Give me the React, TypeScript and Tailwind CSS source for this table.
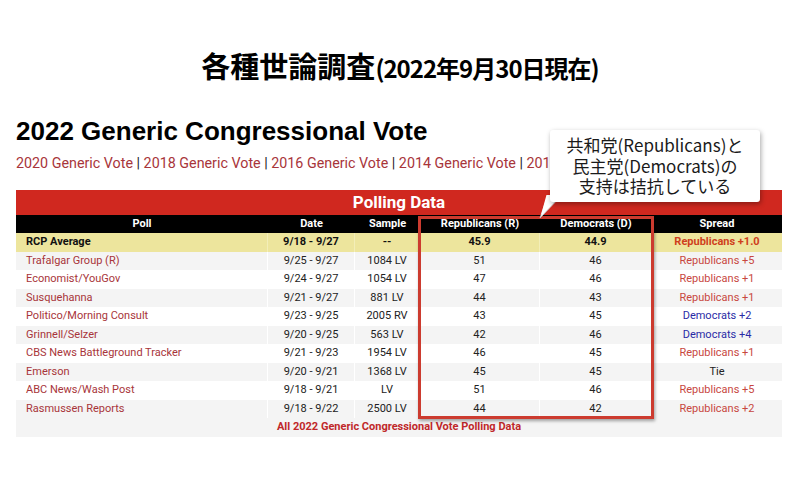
import React from "react";

type Row = {
  poll: string;
  date: string;
  sample: string;
  r: string;
  d: string;
  spread: string;
  party: "R" | "D" | "T";
};

const rows: Row[] = [
  { poll: "Trafalgar Group (R)", date: "9/25 - 9/27", sample: "1084 LV", r: "51", d: "46", spread: "Republicans +5", party: "R" },
  { poll: "Economist/YouGov", date: "9/24 - 9/27", sample: "1054 LV", r: "47", d: "46", spread: "Republicans +1", party: "R" },
  { poll: "Susquehanna", date: "9/21 - 9/27", sample: "881 LV", r: "44", d: "43", spread: "Republicans +1", party: "R" },
  { poll: "Politico/Morning Consult", date: "9/23 - 9/25", sample: "2005 RV", r: "43", d: "45", spread: "Democrats +2", party: "D" },
  { poll: "Grinnell/Selzer", date: "9/20 - 9/25", sample: "563 LV", r: "42", d: "46", spread: "Democrats +4", party: "D" },
  { poll: "CBS News Battleground Tracker", date: "9/21 - 9/23", sample: "1954 LV", r: "46", d: "45", spread: "Republicans +1", party: "R" },
  { poll: "Emerson", date: "9/20 - 9/21", sample: "1368 LV", r: "45", d: "45", spread: "Tie", party: "T" },
  { poll: "ABC News/Wash Post", date: "9/18 - 9/21", sample: "LV", r: "51", d: "46", spread: "Republicans +5", party: "R" },
  { poll: "Rasmussen Reports", date: "9/18 - 9/22", sample: "2500 LV", r: "44", d: "42", spread: "Republicans +2", party: "R" },
];

const cols = "grid grid-cols-[252px_87px_65px_120px_112px_130px]";

export default function App() {
  return (
    <div
      className="relative w-[800px] h-[494px] overflow-hidden bg-white"
      style={{ fontFamily: "Roboto, 'Noto Sans CJK JP', sans-serif" }}
    >
      <div className="h-[84px] pt-[48px]">
        <h1
          className="h-[34px] text-center leading-[34px] font-bold text-black whitespace-nowrap"
          style={{ fontFamily: "'Noto Sans CJK JP', sans-serif" }}
        >
          <span className="text-[29px]">各種世論調査</span>
          <span className="text-[24px] tracking-[-1px]">(2022年9月30日現在)</span>
        </h1>
      </div>

      <div className="px-4">
        <div
          className="mt-[32px] h-[30px] text-[26px] leading-[30px] font-bold text-black whitespace-nowrap"
          style={{ fontFamily: "'Liberation Sans', Arial, sans-serif" }}
        >
          2022 Generic Congressional Vote
        </div>
        <div className="mt-[7px] h-[20px] text-[14.3px] leading-[20px] text-[#a8353a] whitespace-nowrap">
          2020 Generic Vote <span className="text-[#222]">|</span> 2018 Generic Vote{" "}
          <span className="text-[#222]">|</span> 2016 Generic Vote <span className="text-[#222]">|</span> 2014
          Generic Vote <span className="text-[#222]">|</span> 201
        </div>

        <div className="relative mt-[17px] w-[766px] text-[11px]">
          <div className="h-[25px] bg-[#d0281f] text-white font-bold text-[17px] leading-[25px] text-center">
            Polling Data
          </div>
          <div className={`${cols} h-[18px] bg-black text-white font-bold leading-[18px] text-center`}>
            <div>Poll</div>
            <div>Date</div>
            <div>Sample</div>
            <div>Republicans (R)</div>
            <div>Democrats (D)</div>
            <div>Spread</div>
          </div>
          <div className={`${cols} h-[18.5px] bg-[#ede59d] font-bold leading-[18.5px] text-center text-[#111]`}>
            <div className="text-left pl-[10px] border-r border-[#f3eeb8]">RCP Average</div>
            <div className="border-r border-[#f3eeb8]">9/18 - 9/27</div>
            <div className="border-r border-[#f3eeb8]">--</div>
            <div className="border-r border-[#f3eeb8]">45.9</div>
            <div className="border-r border-[#f3eeb8]">44.9</div>
            <div className="text-[#cf3f1c]">Republicans +1.0</div>
          </div>
          {rows.map((r, i) => (
            <div
              key={r.poll}
              className={`${cols} h-[18.5px] leading-[18.5px] text-center text-[#222] ${
                i % 2 === 0 ? "bg-[#f4f4f4]" : "bg-white"
              }`}
            >
              <div className="text-left pl-[10px] text-[#a8353a] border-r border-white">{r.poll}</div>
              <div className="border-r border-white">{r.date}</div>
              <div className="border-r border-white">{r.sample}</div>
              <div className="border-r border-white">{r.r}</div>
              <div className="border-r border-white">{r.d}</div>
              <div
                className={
                  r.party === "R" ? "text-[#c8473f]" : r.party === "D" ? "text-[#2a2aa6]" : "text-[#222]"
                }
              >
                {r.spread}
              </div>
            </div>
          ))}
          <div className="h-[18.5px] leading-[18.5px] bg-[#f4f4f4] text-center font-bold text-[#c0282a]">
            All 2022 Generic Congressional Vote Polling Data
          </div>

          <div className="absolute left-[402px] top-[26px] w-[236px] h-[203px] border-[3px] border-[#cc3b2f] shadow-[1px_2px_3px_rgba(0,0,0,0.35)]" />
        </div>
      </div>

      {/* Callout */}
      <svg className="absolute left-[530px] top-[195px]" width="40" height="26" viewBox="0 0 40 26">
        <polygon points="18,0 32,0 10,23" fill="white" stroke="#c8c8c8" strokeWidth="0.8" />
        <polygon points="17,-2 33,-2 11,20" fill="white" />
      </svg>
      <div
        className="absolute left-[550px] top-[130px] w-[210px] h-[72px] bg-white rounded-[3px] shadow-[1px_2px_5px_rgba(0,0,0,0.35)] flex flex-col items-center justify-center text-[17px] leading-[20.5px] text-[#1a1a1a]"
        style={{ fontFamily: "'Noto Sans CJK JP', sans-serif" }}
      >
        <div className="h-[20.5px]">共和党(Republicans)と</div>
        <div className="h-[20.5px]">民主党(Democrats)の</div>
        <div className="h-[20.5px]">支持は拮抗している</div>
      </div>
    </div>
  );
}
